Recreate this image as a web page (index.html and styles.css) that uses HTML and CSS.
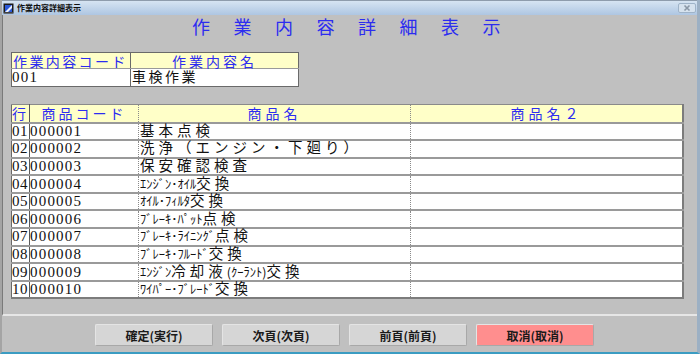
FILE: index.html
```html
<!DOCTYPE html>
<html lang="ja">
  <head>
    <meta charset="utf-8" />
    <title>作業内容詳細表示</title>
    <link rel="stylesheet" href="styles.css">
  </head>
  <body>
    <div class="window">
      <!-- title bar -->
      <div class="titlebar">
        <svg class="app-icon" width="11" height="11" viewBox="0 0 11 11">
          <rect x="0.5" y="0.5" width="10" height="10" fill="#1a1a1a" />
          <rect x="2" y="2" width="7" height="7" fill="#2a58d8" />
          <path d="M2 9 L9 2 L9 5 L5 9 Z" fill="#e8f0ff" />
          <rect x="1" y="9.5" width="9" height="1" fill="#6a6a6a" />
        </svg>
        <span class="title">作業内容詳細表示</span>
        <span class="close-btn">
          <svg width="18" height="10" viewBox="0 0 18 10">
            <rect x="0.5" y="0.5" width="17" height="9" rx="1.5" fill="#d6e2ee" stroke="#9fb3c8" />
            <path d="M6.5 2.5 L11.5 7.5 M11.5 2.5 L6.5 7.5" stroke="#8a97a6" stroke-width="1.6" />
          </svg>
        </span>
      </div>

      <div class="panel">
        <h1>作業内容詳細表示</h1>

        <table class="work">
          <tr class="head">
            <th class="w-code">作業内容コード</th>
            <th class="w-name">作業内容名</th>
          </tr>
          <tr>
            <td class="num">001</td>
            <td class="name">車検作業</td>
          </tr>
        </table>

        <table class="items">
          <tr class="head">
            <th class="c-row">行</th>
            <th class="c-code">商品コード</th>
            <th class="c-name">商品名</th>
            <th class="c-name2">商品名２</th>
          </tr>
          <tr><td class="num">01</td><td class="num code">000001</td><td class="name">基本点検</td><td class="name2"></td></tr>
          <tr><td class="num">02</td><td class="num code">000002</td><td class="name">洗浄（エンジン・下廻り）</td><td class="name2"></td></tr>
          <tr><td class="num">03</td><td class="num code">000003</td><td class="name">保安確認検査</td><td class="name2"></td></tr>
          <tr><td class="num">04</td><td class="num code">000004</td><td class="name"><span class="hw">ｴﾝｼﾞﾝ･ｵｲﾙ</span>交換</td><td class="name2"></td></tr>
          <tr><td class="num">05</td><td class="num code">000005</td><td class="name"><span class="hw">ｵｲﾙ･ﾌｨﾙﾀ</span>交換</td><td class="name2"></td></tr>
          <tr><td class="num">06</td><td class="num code">000006</td><td class="name"><span class="hw">ﾌﾞﾚｰｷ･ﾊﾟｯﾄ</span>点検</td><td class="name2"></td></tr>
          <tr><td class="num">07</td><td class="num code">000007</td><td class="name"><span class="hw">ﾌﾞﾚｰｷ･ﾗｲﾆﾝｸﾞ</span>点検</td><td class="name2"></td></tr>
          <tr><td class="num">08</td><td class="num code">000008</td><td class="name"><span class="hw">ﾌﾞﾚｰｷ･ﾌﾙｰﾄﾞ</span>交換</td><td class="name2"></td></tr>
          <tr><td class="num">09</td><td class="num code">000009</td><td class="name"><span class="hw">ｴﾝｼﾞﾝ</span>冷却液<span class="hw">(ｸｰﾗﾝﾄ)</span>交換</td><td class="name2"></td></tr>
          <tr><td class="num">10</td><td class="num code">000010</td><td class="name"><span class="hw">ﾜｲﾊﾟｰ･ﾌﾞﾚｰﾄﾞ</span>交換</td><td class="name2"></td></tr>
        </table>
      </div>

      <div class="buttons">
        <button class="btn">確定(実行)</button>
        <button class="btn">次頁(次頁)</button>
        <button class="btn">前頁(前頁)</button>
        <button class="btn btn-cancel">取消(取消)</button>
      </div>
    </div>
  </body>
</html>
```

FILE: styles.css
```css
:root {
  --face: #c0c0c0;
  --head-bg: #ffffc8;
  --head-text: #2c2cf0;
  --line: #9a9a9a;
}

* {
  box-sizing: border-box;
}

html,
body {
  margin: 0;
  padding: 0;
}

body {
  width: 700px;
  height: 354px;
  overflow: hidden;
  font-family: "Liberation Serif", "Noto Sans CJK JP", serif;
  background: var(--face);
}

.window {
  display: flex;
  flex-direction: column;
  height: 354px;
  border-left: 2px solid #a4a4a4;
  border-right: 3px solid #9cb0c4;
  border-bottom: 2px solid #3b9cc2;
  background: var(--face);
}

/* title bar */
.titlebar {
  display: flex;
  align-items: center;
  flex: none;
  height: 15px;
  padding: 0 1px;
  border-top: 1px solid #8e9cac;
  background: linear-gradient(#d6e4f2, #aec6e2);
}
.app-icon {
  display: block;
  margin-right: 3px;
}
.title {
  font-family: "Noto Sans CJK JP", sans-serif;
  font-size: 8px;
  font-weight: 700;
  color: #101010;
  line-height: 1;
}
.close-btn {
  margin-left: auto;
  display: flex;
}

/* main area */
.panel {
  flex: none;
  height: 301px;
  padding: 0 0 0 8px;
  border-left: 1px solid #7a7a7a;
  border-bottom: 2px solid #e6e6e6;
}

h1 {
  margin: -2px 0 0;
  height: 39px;
  padding: 0 0 0 8px;
  text-align: center;
  font-family: "Noto Sans CJK JP", sans-serif;
  font-size: 18px;
  font-weight: 400;
  line-height: 26px;
  letter-spacing: 23.5px;
  color: var(--head-text);
}

table {
  border-collapse: collapse;
  background: #fff;
}
th {
  padding: 0;
  background: var(--head-bg);
  color: var(--head-text);
  font-family: "Noto Sans CJK JP", sans-serif;
  font-weight: 400;
  font-size: 14px;
  line-height: 14px;
  white-space: nowrap;
}
td {
  padding: 0;
  color: #111;
  line-height: 15px;
  white-space: nowrap;
  vertical-align: middle;
}
.num {
  font-size: 15px;
  letter-spacing: 1.2px;
}
.name {
  font-size: 14.5px;
  letter-spacing: 4px;
  padding-left: 1px;
}
.hw {
  font-family: "Noto Sans CJK JP", sans-serif;
  font-size: 12.5px;
  line-height: 12px;
  letter-spacing: 0;
}

/* work table */
.work {
  width: 288px;
  border: 1px solid #6a6a6a;
}
.work tr.head th {
  height: 16px;
}
.work td {
  height: 18px;
}
.work th,
.work td {
  border-right: 1px solid #6a6a6a;
}
.work .head th {
  border-bottom: 1px solid #9a9a9a;
}
.w-code {
  width: 119px;
  text-align: left;
  letter-spacing: 2.4px;
  padding-left: 1px;
}
.w-name {
  text-align: center;
  letter-spacing: 3px;
}
.work .name {
  letter-spacing: 2.5px;
  font-size: 14px;
}

/* items table */
.items {
  width: 673px;
  margin-top: 17px;
  border-top: 1px solid #8a8a8a;
  border-left: 1px solid #6a6a6a;
  border-right: 2px solid #7c7c7c;
  border-bottom: 2px solid #7c7c7c;
}
.items td {
  height: 17.6px;
}
.items th {
  height: 18px;
}
.items tr {
  border-bottom: 2px solid var(--line);
}
.items tr:last-child {
  border-bottom: none;
}
.c-row {
  width: 18px;
  text-align: left;
}
.c-code {
  width: 109px;
  letter-spacing: 3px;
}
.c-name {
  width: 272px;
  letter-spacing: 4px;
}
.c-name2 {
  letter-spacing: 4px;
}
.items th:first-child,
.items td:first-child {
  border-right: 1px solid #5a5a5a;
}
.items th:nth-child(2),
.items td:nth-child(2),
.items th:nth-child(3),
.items td:nth-child(3) {
  border-right: 1px dotted #8a8a8a;
}
.items td.num:first-child {
  letter-spacing: 0.5px;
}

/* button bar */
.buttons {
  flex: 1;
  display: flex;
  gap: 9px;
  padding: 8px 0 0 93px;
}
.btn {
  width: 118px;
  height: 22px;
  padding: 0;
  border: 1px solid #e4e4e4;
  border-right-color: #a8a8a8;
  border-bottom-color: #a8a8a8;
  border-radius: 2px;
  background: #d6d6d6;
  font-family: "Noto Sans CJK JP", sans-serif;
  font-size: 12px;
  font-weight: 700;
  color: #1a1a1a;
}
.btn-cancel {
  background: #ff8e8e;
}
```
